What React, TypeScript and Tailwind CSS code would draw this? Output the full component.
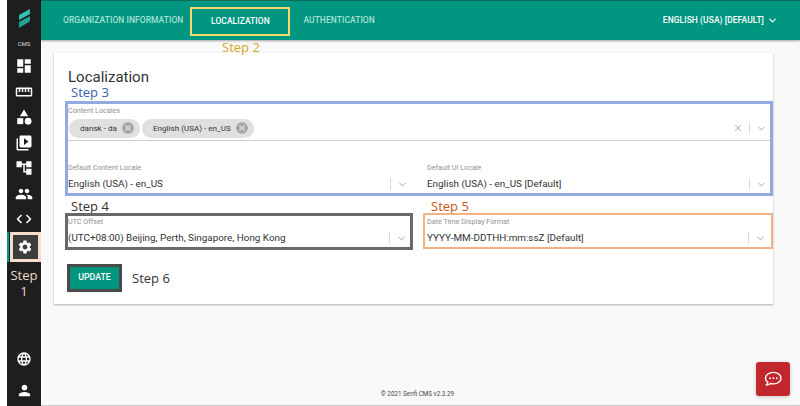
import { ChevronDown, X } from "lucide-react"
import {
    MdAccountTree,
    MdCancel,
    MdCategory,
    MdCode,
    MdDashboard,
    MdLanguage,
    MdPeople,
    MdPerson,
    MdSettings,
    MdStraighten,
    MdVideoLibrary,
} from "react-icons/md"

const roboto = "font-['Roboto',sans-serif]"
const openSans = "font-['Open_Sans',sans-serif]"

const Arrow = () => (
    <div className="flex items-center shrink-0">
        <div className="w-px h-[12px] bg-[#d9d9d9]" />
        <ChevronDown className="w-[11px] h-[11px] ml-[6px] mr-[3px] text-[#c4c4c4]" strokeWidth={2.5} />
    </div>
)

const SelectField = ({ label, value }: { label: string; value: string }) => (
    <div className="flex-1 min-w-0">
        <div className="text-[7.2px] leading-[10px] text-[#909090]">{label}</div>
        <div className="flex items-center justify-between mt-[2px] h-[18px]">
            <span className="text-[9.9px] text-[#333333] whitespace-nowrap">{value}</span>
            <Arrow />
        </div>
    </div>
)

const Chip = ({ label }: { label: string }) => (
    <div className="flex items-center h-[19px] rounded-full bg-[#e0e0e0] pl-[11px] pr-[5px] gap-[4px]">
        <span className="text-[8.1px] text-[#333333] whitespace-nowrap">{label}</span>
        <MdCancel className="w-[14px] h-[14px] text-[#a6a6a6]" />
    </div>
)

const navIcons = [MdDashboard, MdStraighten, MdCategory, MdVideoLibrary, MdAccountTree, MdPeople, MdCode]

const App = () => {
    return (
        <main className={`relative flex w-[800px] h-[406px] overflow-hidden bg-white pl-[7px] ${roboto}`}>
            <aside className="w-[34px] shrink-0 bg-[#1e1e1e] flex flex-col items-center">
                <svg viewBox="0 0 14 22" className="w-[13px] h-[20px] mt-[9px]">
                    <path d="M1 6.5 13 0v5.5L1 12z" fill="#2fc4b0" />
                    <path d="M1 14 13 8v5.5L1 21z" fill="#1fa596" />
                </svg>
                <span className="text-[6px] text-[#d8d8d8] mt-[11px] leading-[8px]">CMS</span>
                <div className="flex flex-col items-center gap-[7.5px] mt-[9px]">
                    {navIcons.map((Icon, i) => (
                        <Icon key={i} className="w-[18px] h-[18px] text-white" />
                    ))}
                </div>
                <div className="relative w-[34px] h-[30px] mt-[4px] flex items-center justify-center">
                    <div className="absolute left-0 top-0 bottom-0 w-[2px] bg-[#00967f]" />
                    <div className="w-[31px] h-[30px] ml-[2px] border-[3px] border-[#f6dccb] bg-[#3d3d3d] flex items-center justify-center">
                        <MdSettings className="w-[16px] h-[16px] text-white" />
                    </div>
                </div>
                <div className={`text-[13px] leading-[16px] text-[#f3d9c7] text-center mt-[5px] ${openSans}`}>
                    Step
                    <br />1
                </div>
                <div className="mt-auto mb-[7px] flex flex-col items-center gap-[15px]">
                    <MdLanguage className="w-[16px] h-[16px] text-white" />
                    <MdPerson className="w-[17px] h-[17px] text-white" />
                </div>
            </aside>

            <div className="relative flex-1 flex flex-col min-w-0 bg-[#f9f9f9] border-b border-[#c8c8c8]">
                <header className="relative h-[40px] shrink-0 bg-[#00967f] border-t border-[#0b6b5e] shadow-[0_1px_2px_rgba(0,0,0,0.35)] flex items-center pl-[22px] pr-[22px] text-[8.44px] tracking-[0.09px] font-medium">
                    <span className="text-[#a6e0d5] whitespace-nowrap">ORGANIZATION INFORMATION</span>
                    <div className="ml-[7px] mt-[2px] w-[100px] h-[29px] border-[2.5px] border-[#f5d76e] flex items-center justify-center text-white whitespace-nowrap">
                        LOCALIZATION
                    </div>
                    <span className="ml-[13px] text-[#a6e0d5] whitespace-nowrap">AUTHENTICATION</span>
                    <div className="ml-auto flex items-center gap-[3px] text-white whitespace-nowrap">
                        ENGLISH (USA) [DEFAULT]
                        <ChevronDown className="w-[11px] h-[11px]" strokeWidth={2.5} />
                    </div>
                    <span className={`absolute left-[181px] top-[38px] text-[13px] leading-[16px] font-normal tracking-normal text-[#d6a62c] ${openSans}`}>
                        Step 2
                    </span>
                </header>

                <section className="ml-[13px] mr-[27px] mt-[13px] h-[251px] bg-white shadow-[0_1px_2px_rgba(0,0,0,0.3)] pl-[11px] flex flex-col">
                    <h1 className="ml-[3px] mt-[16px] text-[15px] leading-[16px] text-[#333333]">Localization</h1>
                    <div className={`ml-[6px] text-[13px] leading-[14px] text-[#3a5fa8] ${openSans}`}>Step 3</div>

                    <div className="mt-[2px] w-[708px] h-[95px] border-[3px] border-[#93aae0] pt-[2px] flex flex-col">
                        <div className="text-[7.2px] leading-[10px] text-[#909090]">Content Locales</div>
                        <div className="flex items-center justify-between border-b border-[#d0d0d0] h-[25px]">
                            <div className="flex items-center gap-[2px] ml-[1px]">
                                <Chip label="dansk - da" />
                                <Chip label="English (USA) - en_US" />
                            </div>
                            <div className="flex items-center">
                                <X className="w-[10px] h-[10px] mr-[6px] text-[#b5b5b5]" strokeWidth={2.5} />
                                <Arrow />
                            </div>
                        </div>
                        <div className="flex gap-[16px] mt-[22px]">
                            <SelectField label="Default Content Locale" value="English (USA) - en_US" />
                            <SelectField label="Default UI Locale" value="English (USA) - en_US [Default]" />
                        </div>
                    </div>

                    <div className={`flex text-[13px] leading-[14px] mt-[3px] ${openSans}`}>
                        <span className="ml-[6px] w-[360px] text-[#333333]">Step 4</span>
                        <span className="text-[#c9581c]">Step 5</span>
                    </div>

                    <div className="flex gap-[10px] w-[708px]">
                        <div className="w-[348px] h-[37px] border-[3px] border-[#696969] pt-[1px]">
                            <SelectField label="UTC Offset" value="(UTC+08:00) Beijing, Perth, Singapore, Hong Kong" />
                        </div>
                        <div className="w-[350px] h-[36px] border-[2px] border-[#f4b183] px-[2px] pt-[2px]">
                            <SelectField label="Date Time Display Format" value="YYYY-MM-DDTHH:mm:ssZ [Default]" />
                        </div>
                    </div>

                    <div className="flex items-center mt-[14px] ml-[2px]">
                        <button className="w-[55px] h-[28px] border-[3px] border-[#4a4a4a] bg-[#00967f] text-white text-[8.8px] font-medium">
                            UPDATE
                        </button>
                        <span className={`ml-[10px] pt-[2px] text-[13px] text-[#333333] ${openSans}`}>Step 6</span>
                    </div>
                </section>

                <footer className="mt-auto pb-[6px] pr-[6px] text-center text-[6.3px] leading-[9px] text-[#444444]">
                    © 2021 Senfi CMS v2.3.29
                </footer>

                <button className="absolute right-[10px] bottom-[9px] w-[34px] h-[34px] rounded-[3px] bg-[#c1272d] flex items-center justify-center shadow-[0_1px_4px_rgba(0,0,0,0.2)]">
                    <svg viewBox="0 0 24 24" className="w-[20px] h-[20px]" fill="none" stroke="white" strokeWidth={1.7} strokeLinejoin="round">
                        <path d="M12.5 4C7.3 4 3 7.1 3 11c0 2 1.1 3.7 2.8 4.9-.2 1.4-1 2.5-2 3.3 2.1 0 3.9-.7 5.3-1.8 1.1.3 2.2.4 3.4.4 5.2 0 9-3 9-6.8S17.700 4 12.500 4z" />
                        <circle cx="8.500" cy="11" r="1.100" fill="white" stroke="none" />
                        <circle cx="12.500" cy="11" r="1.100" fill="white" stroke="none" />
                        <circle cx="16.500" cy="11" r="1.100" fill="white" stroke="none" />
                    </svg>
                </button>
            </div>
        </main>
    )
}

export default App
